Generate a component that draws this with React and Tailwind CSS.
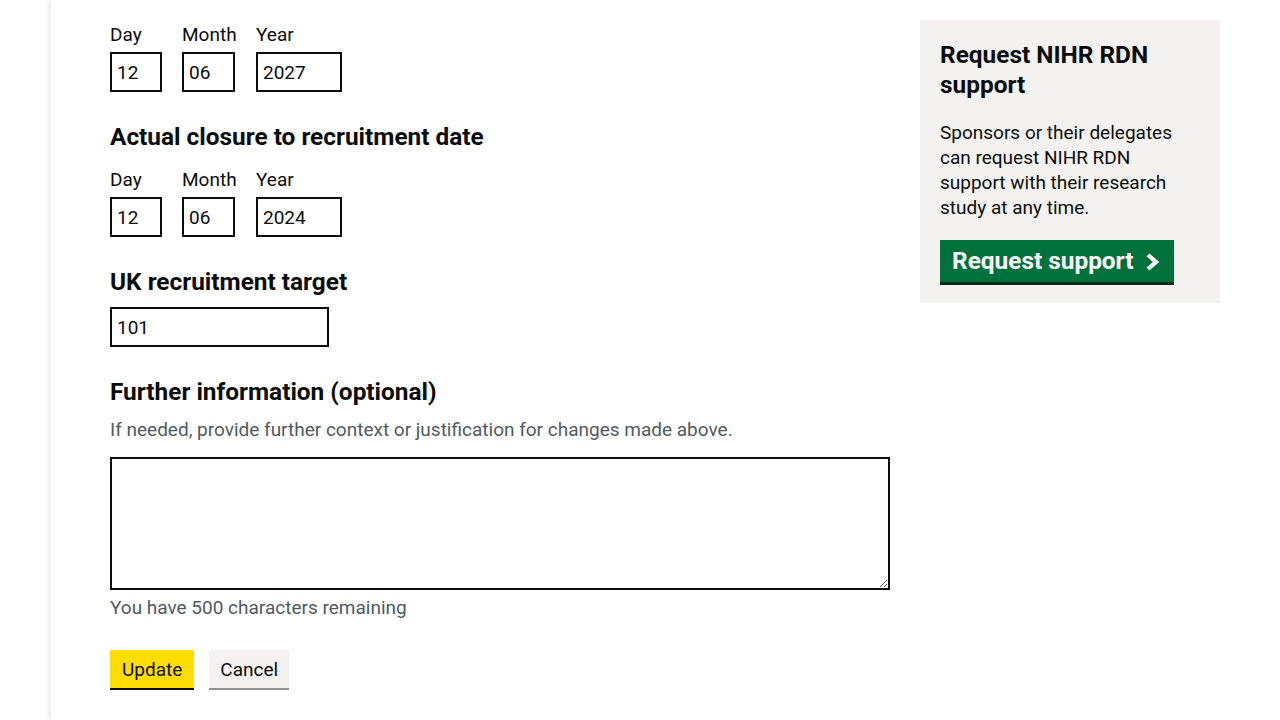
import React from "react";

const font = { fontFamily: "Roboto, 'Liberation Sans', sans-serif" };

function DateInput({ label, value, w, col }) {
  return (
    <div className={`flex flex-col ${col}`}>
      <label className="text-[19px] leading-[25px] text-[#0b0c0c] mb-[5px] whitespace-nowrap">{label}</label>
      <input
        readOnly
        value={value}
        className={`${w} h-[40px] border-2 border-[#0b0c0c] px-[5px] text-[19px] text-[#0b0c0c] outline-none`}
        style={font}
      />
    </div>
  );
}

function DateGroup({ d, m, y }) {
  return (
    <div className="flex">
      <DateInput label="Day" value={d} w="w-[52px]" col="w-[52px] mr-[20px]" />
      <DateInput label="Month" value={m} w="w-[53px]" col="w-[54px] mr-[20px]" />
      <DateInput label="Year" value={y} w="w-[86px]" col="w-[86px]" />
    </div>
  );
}

export default function App() {
  return (
    <div className="min-h-[720px] bg-white text-[#0b0c0c]" style={font}>
      <div className="ml-[50px] min-h-[720px] bg-white shadow-[-2px_0_3px_rgba(0,0,0,0.07)] border-l border-[#f0f0f0] pl-[59px] pr-[60px] pt-[22px] flex gap-[30px]">
        <div className="w-[780px] flex flex-col">
          <DateGroup d="12" m="06" y="2027" />
          <h2 className="mt-[30px] text-[24.4px] leading-[30px] font-bold mb-[15px]">Actual closure to recruitment date</h2>
          <DateGroup d="12" m="06" y="2024" />
          <h2 className="mt-[30px] text-[24.4px] leading-[30px] font-bold mb-[10px]">UK recruitment target</h2>
          <input
            readOnly
            value="101"
            className="w-[219px] h-[40px] border-2 border-[#0b0c0c] px-[5px] text-[19px] outline-none"
            style={font}
          />
          <h2 className="mt-[30px] text-[24.4px] leading-[30px] font-bold mb-[10px]">Further information (optional)</h2>
          <p className="text-[19px] leading-[25px] text-[#505a5f] mb-[15px]">
            If needed, provide further context or justification for changes made above.
          </p>
          <textarea
            className="w-[780px] h-[133px] border-2 border-[#0b0c0c] p-[5px] text-[19px] outline-none block"
            style={font}
          />
          <p className="text-[19px] leading-[25px] text-[#505a5f] mt-[5px]">You have 500 characters remaining</p>
          <div className="flex gap-[15px] mt-[30px]">
            <button className="h-[38px] pt-[2px] px-[12px] bg-[#ffdd00] text-[19px] text-[#0b0c0c] shadow-[0_2px_0_#0b0c0c]" style={font}>
              Update
            </button>
            <button className="h-[38px] pt-[2px] px-[11px] bg-[#f3f2f1] text-[19px] text-[#0b0c0c] shadow-[0_2px_0_#929191]" style={font}>
              Cancel
            </button>
          </div>
        </div>
        <div className="w-[300px] self-start mt-[-2px] bg-[#f3f2f1] p-[20px] pb-[21px]">
          <h2 className="text-[24.4px] leading-[30px] font-bold">Request NIHR RDN support</h2>
          <p className="text-[19px] leading-[25px] mt-[20px]">
            Sponsors or their delegates can request NIHR RDN support with their research study at any time.
          </p>
          <button
            className="mt-[20px] h-[42px] pl-[12px] pr-[14px] bg-[#00703c] text-white text-[24.4px] font-bold flex items-center gap-[12px] shadow-[0_3px_0_#002d18]"
            style={font}
          >
            Request support
            <svg width="15" height="18" viewBox="0 0 15 18" className="mt-[1px]">
              <path d="M3 2 L11 9 L3 16" stroke="white" strokeWidth="4.2" fill="none" strokeLinejoin="miter" />
            </svg>
          </button>
        </div>
      </div>
    </div>
  );
}
